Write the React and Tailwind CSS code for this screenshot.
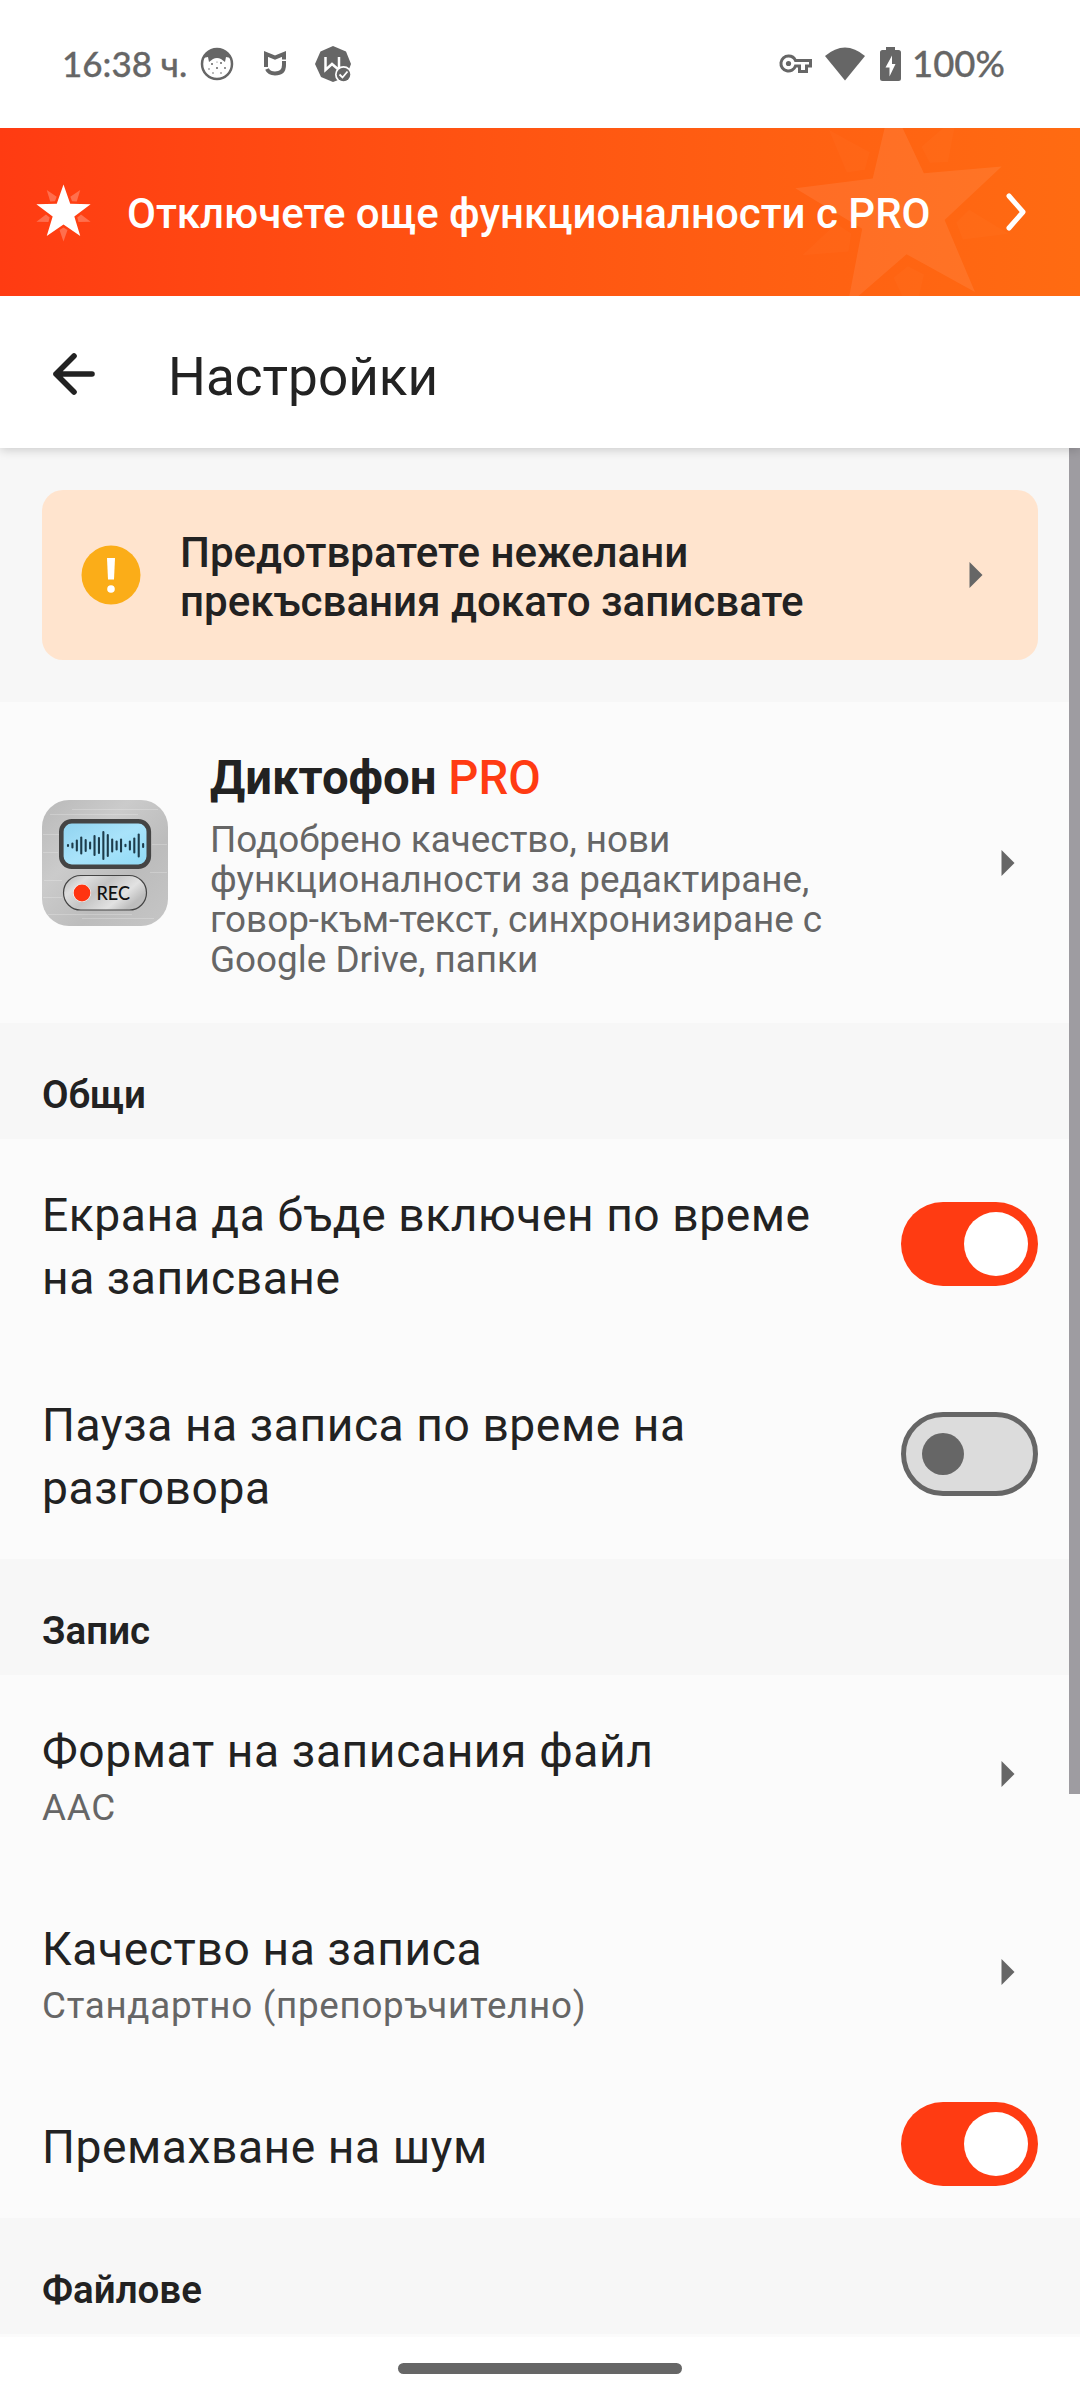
const STAR = "M0 -50 L11.8 -16.2 L47.6 -15.5 L19 6.2 L29.4 40.5 L0 20 L-29.4 40.5 L-19 6.2 L-47.6 -15.5 L-11.8 -16.2Z";
const RAYS = [0, 72, 144, 216, 288];

function BurstStar({ rayOpacity }) {
  return (
    <g fill="#fff">
      <path d={STAR} />
      {RAYS.map((a) => (
        <path key={a} transform={`rotate(${a})`} opacity={rayOpacity} d="M0 50 L-7 30 L0 25.500 L7 30Z" />
      ))}
    </g>
  );
}

function Caret() {
  return (
    <svg className="h-[28px] w-[14px] shrink-0" viewBox="0 0 14 28">
      <path d="M0.500 1 L13.500 14 L0.500 27Z" fill="#666" />
    </svg>
  );
}

function Switch({ on }) {
  return on ? (
    <span className="flex h-[84px] w-[137px] shrink-0 items-center justify-end rounded-full bg-[#ff3b12] pr-[10px]">
      <span className="h-[64px] w-[64px] rounded-full bg-white" />
    </span>
  ) : (
    <span className="flex h-[84px] w-[137px] shrink-0 items-center rounded-full border-[5px] border-[#666] bg-[#dcdcdc] pl-[16px]">
      <span className="h-[42px] w-[42px] rounded-full bg-[#666]" />
    </span>
  );
}

function StatusBar() {
  return (
    <div className="flex h-[128px] items-center justify-between bg-white pl-[62px] pr-[75px] text-[#666]">
      <div className="flex items-center">
        <span className="w-[138px] whitespace-nowrap pb-[1px] font-['Lato'] text-[35px] font-medium [-webkit-text-stroke:0.300px_#666]">16:38 ч.</span>
        <svg className="h-[34px] w-[34px]" viewBox="0 0 34 34">
          <circle cx="17" cy="17" r="15" fill="#fff" stroke="#666" strokeWidth="2.500" />
          <path d="M3 11 Q8 2 17 2 Q26 2 31 11 L26 10 L25 15 L21 12 Q17 10 13 12 L9 15 L8 10Z" fill="#666" />
          <g fill="#666">
            <circle cx="12" cy="17" r="1" /><circle cx="21" cy="16" r="1" /><circle cx="17" cy="21" r="1" />
            <circle cx="9" cy="22" r="0.800" /><circle cx="25" cy="21" r="0.900" /><circle cx="13" cy="26" r="0.800" />
            <circle cx="21" cy="26" r="0.800" /><circle cx="17" cy="15" r="0.600" />
          </g>
        </svg>
        <svg className="ml-[30px] h-[26px] w-[22px]" viewBox="0 0 22 26">
          <path d="M2 16 V3 L11 6.500 L20 3 V8.500 M20 10 V14 Q20 22.500 11 22.500 Q5 22.500 3 18" fill="none" stroke="#666" strokeWidth="4" />
        </svg>
        <svg className="ml-[29px] h-[36px] w-[37px]" viewBox="0 0 37 36">
          <path d="M18 0 L31 5.500 L36 18 L31 31 L18 36 L6 31 L0 18 L5.500 5.500Z" fill="#666" />
          <path d="M10.500 11 V24 L17 18 L24 24 V11" fill="none" stroke="#fff" strokeWidth="2.500" />
          <circle cx="28.500" cy="28.500" r="8.500" fill="#fff" />
          <circle cx="28.500" cy="28.500" r="6.800" fill="#666" />
          <path d="M24.500 28.500 L27.500 31.500 L32.500 25.500" fill="none" stroke="#fff" strokeWidth="1.800" />
        </svg>
      </div>
      <div className="flex items-center">
        <svg className="h-[20px] w-[34px]" viewBox="0 0 34 20">
          <path d="M9.500 2 A7.500 7.500 0 1 0 16.500 12 H20.500 V17.500 H27.500 V12 H31.500 V6.500 H16.500 A7.500 7.500 0 0 0 9.500 2Z" fill="none" stroke="#666" strokeWidth="3" />
          <circle cx="9.500" cy="9.500" r="2.600" fill="#666" />
        </svg>
        <svg className="ml-[12px] h-[34px] w-[40px]" viewBox="0 0 40 34">
          <path d="M0 9 Q20 -8 40 9 L20 33.500Z" fill="#666" />
        </svg>
        <svg className="ml-[15px] h-[34px] w-[21px]" viewBox="0 0 21 34">
          <path d="M6 0 H15 V3 H18.500 Q21 3 21 5.500 V31.500 Q21 34 18.500 34 H2.500 Q0 34 0 31.500 V5.500 Q0 3 2.500 3 H6Z" fill="#666" />
          <path d="M12 8.500 L5.500 20.500 H9.500 V29.500 L15.500 17 H12Z" fill="#fff" />
        </svg>
        <span className="ml-[11px] w-[93px] whitespace-nowrap pb-[2px] font-['Lato'] text-[36.500px] font-medium [-webkit-text-stroke:0.300px_#666]">100%</span>
      </div>
    </div>
  );
}

function ProBanner() {
  return (
    <div className="relative z-20 flex h-[168px] items-center overflow-hidden bg-linear-to-r from-[#ff3b12] to-[#ff6b12]">
      <svg className="absolute inset-0 h-[168px] w-[1080px]" viewBox="0 0 1080 168">
        <g transform="translate(902 83) rotate(-6) scale(2.180)" opacity="0.080">
          <BurstStar rayOpacity="0.250" />
        </g>
      </svg>
      <svg className="relative ml-[36px] mt-[2px] h-[58px] w-[56px]" viewBox="0 0 56 58">
        <g transform="translate(27.500 29) scale(0.570)">
          <BurstStar rayOpacity="0.250" />
        </g>
      </svg>
      <span className="relative ml-[35px] mt-[3px] w-[820px] whitespace-nowrap text-[42px] font-medium text-white">Отключете още функционалности с PRO</span>
      <svg className="relative ml-[59px] h-[38px] w-[20px]" viewBox="0 0 20 38">
        <path d="M3 3 L17 19 L3 35" fill="none" stroke="#fff" strokeWidth="5" strokeLinecap="round" strokeLinejoin="round" />
      </svg>
    </div>
  );
}

const BARS = [1, 4, 10, 16, 11, 6, 19, 15, 27, 21, 12, 8, 12, 1.5, 8, 14, 22, 3];

function AppIcon() {
  return (
    <svg className="h-[126px] w-[126px] shrink-0" viewBox="0 0 126 126">
      <defs>
        <linearGradient id="metal" x1="0" y1="0" x2="1" y2="1">
          <stop offset="0" stopColor="#b9b9b9" />
          <stop offset="0.350" stopColor="#cbcbcb" />
          <stop offset="0.650" stopColor="#bcbcbc" />
          <stop offset="1" stopColor="#c6c6c6" />
        </linearGradient>
        <linearGradient id="lcd" x1="0" y1="0" x2="1" y2="1">
          <stop offset="0" stopColor="#8fd2ef" />
          <stop offset="0.500" stopColor="#a9e3fa" />
          <stop offset="1" stopColor="#8fdaf5" />
        </linearGradient>
        <linearGradient id="button" x1="0" y1="0" x2="1" y2="0.500">
          <stop offset="0" stopColor="#b4b4b4" />
          <stop offset="0.250" stopColor="#dedede" />
          <stop offset="0.500" stopColor="#c4c4c4" />
          <stop offset="0.800" stopColor="#e2e2e2" />
          <stop offset="1" stopColor="#bdbdbd" />
        </linearGradient>
      </defs>
      <rect width="126" height="126" rx="27" fill="url(#metal)" />
      <g stroke="#fff" strokeOpacity="0.220">
        <path d="M8 14.500 H96 M30 9.500 H116 M1 34.500 H17 M1 52.500 H16 M110 44.500 H125 M108 72.500 H125 M2 80.500 H20 M1 97.500 H20 M6 114.500 H90 M40 118.500 H112" />
      </g>
      <rect x="19.300" y="21.300" width="87.500" height="45.500" rx="10.500" fill="url(#lcd)" stroke="#444" strokeWidth="4.600" />
      <g stroke="#1d3c4b" strokeWidth="2.100" strokeLinecap="round">
        {BARS.map((h, i) => (
          <path key={i} d={`M${26 + i * 4.42} ${45.5 - h / 2} V${45.5 + h / 2}`} />
        ))}
      </g>
      <rect x="21.500" y="75.500" width="83" height="34.500" rx="17.200" fill="url(#button)" stroke="#444" strokeWidth="1.200" />
      <circle cx="40" cy="93" r="9" fill="#fff" />
      <circle cx="40" cy="93" r="8.400" fill="#ff3410" />
      <text x="54.500" y="100" fontFamily="Lato" fontSize="19.500" fontWeight="500" fill="#111" textLength="33.500" lengthAdjust="spacingAndGlyphs">REC</text>
    </svg>
  );
}

function SectionTitle({ children }) {
  return (
    <div className="flex h-[116px] items-center bg-[#f7f7f7] pl-[42px] pt-[27px] text-[38.500px] font-semibold text-[#222]">{children}</div>
  );
}

function ToggleRow({ className, on, children }) {
  return (
    <div className={"flex items-center justify-between pl-[42px] pr-[42px] " + className}>
      <div className="pt-[6px] text-[46.200px] leading-[63px] tracking-[0.550px]">{children}</div>
      <Switch on={on} />
    </div>
  );
}

function ChoiceRow({ title, value }) {
  return (
    <div className="flex h-[198px] items-center justify-between pl-[42px] pr-[65px]">
      <div className="pt-[6px]">
        <div className="text-[46.200px] leading-[60px] tracking-[0.600px]">{title}</div>
        <div className="pt-[1px] text-[36.750px] leading-[51px] tracking-[0.720px] text-[#666]">{value}</div>
      </div>
      <Caret />
    </div>
  );
}

export default function App() {
  return (
    <div className="relative flex h-[2400px] w-[1080px] flex-col overflow-hidden bg-[#fbfbfb] font-['Roboto',sans-serif] text-[#222]">
      <StatusBar />
      <ProBanner />
      <header className="relative z-10 flex h-[152px] items-center bg-white pl-[52px] shadow-[0_2px_10px_rgba(0,0,0,0.18)]">
        <svg className="mt-[3px] h-[42px] w-[44px]" viewBox="0 0 44 42">
          <path d="M22 3 L4 21 L22 39 M4 21 H40" fill="none" stroke="#222" strokeWidth="5.600" strokeLinecap="round" strokeLinejoin="round" />
        </svg>
        <h1 className="ml-[72px] mt-[11px] text-[53.100px]">Настройки</h1>
      </header>
      <div className="h-[254px] bg-[#f7f7f7] px-[42px] pt-[42px]">
        <div className="flex h-[170px] items-center rounded-[21px] bg-[#ffe4ce] pl-[39px] pr-[55px]">
          <svg className="h-[60px] w-[60px]" viewBox="0 0 60 60">
            <circle cx="30" cy="30" r="29.500" fill="#fbad18" />
            <path d="M26 13 H34 L33 34.500 H27Z" fill="#fff" />
            <circle cx="30" cy="44" r="3.800" fill="#fff" />
          </svg>
          <div className="ml-[39px] flex-1 pt-[3px] text-[42.100px] font-medium leading-[49px]">
            Предотвратете нежелани<br />прекъсвания докато записвате
          </div>
          <Caret />
        </div>
      </div>
      <div className="flex h-[321px] items-center pl-[42px] pr-[65px]">
        <AppIcon />
        <div className="ml-[42px] flex-1 pt-[4px]">
          <div className="text-[47.250px] font-bold leading-[56px]">Диктофон <span className="font-medium text-[#ff3b12]">PRO</span></div>
          <div className="mt-[14px] text-[36.850px] leading-[40px] text-[#666]">
            Подобрено качество, нови<br />функционалности за редактиране,<br />говор-към-текст, синхронизиране с<br />Google Drive, папки
          </div>
        </div>
        <Caret />
      </div>
      <SectionTitle>Общи</SectionTitle>
      <ToggleRow className="h-[210px]" on>Екрана да бъде включен по време<br />на записване</ToggleRow>
      <ToggleRow className="h-[210px]">Пауза на записа по време на<br />разговора</ToggleRow>
      <SectionTitle>Запис</SectionTitle>
      <ChoiceRow title="Формат на записания файл" value="AAC" />
      <ChoiceRow title="Качество на записа" value="Стандартно (препоръчително)" />
      <ToggleRow className="h-[147px] pb-[1px]" on>Премахване на шум</ToggleRow>
      <SectionTitle>Файлове</SectionTitle>
      <div className="mt-[3px] flex flex-1 items-center justify-center bg-white">
        <div className="h-[11px] w-[284px] rounded-full bg-[#666]" />
      </div>
      <div className="absolute right-0 top-[448px] h-[1346px] w-[11px] bg-[#9e9ca1]" />
    </div>
  );
}
